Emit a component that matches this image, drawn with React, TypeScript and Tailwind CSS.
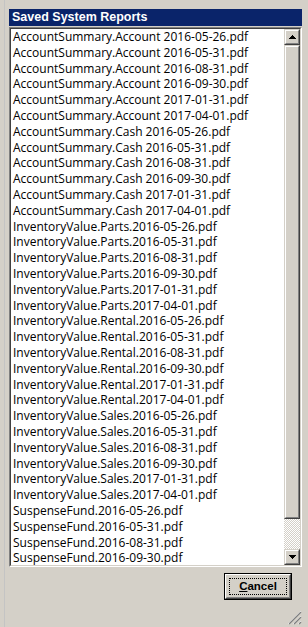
import React from "react";

const items: string[] = [
  "AccountSummary.Account 2016-05-26.pdf",
  "AccountSummary.Account 2016-05-31.pdf",
  "AccountSummary.Account 2016-08-31.pdf",
  "AccountSummary.Account 2016-09-30.pdf",
  "AccountSummary.Account 2017-01-31.pdf",
  "AccountSummary.Account 2017-04-01.pdf",
  "AccountSummary.Cash 2016-05-26.pdf",
  "AccountSummary.Cash 2016-05-31.pdf",
  "AccountSummary.Cash 2016-08-31.pdf",
  "AccountSummary.Cash 2016-09-30.pdf",
  "AccountSummary.Cash 2017-01-31.pdf",
  "AccountSummary.Cash 2017-04-01.pdf",
  "InventoryValue.Parts.2016-05-26.pdf",
  "InventoryValue.Parts.2016-05-31.pdf",
  "InventoryValue.Parts.2016-08-31.pdf",
  "InventoryValue.Parts.2016-09-30.pdf",
  "InventoryValue.Parts.2017-01-31.pdf",
  "InventoryValue.Parts.2017-04-01.pdf",
  "InventoryValue.Rental.2016-05-26.pdf",
  "InventoryValue.Rental.2016-05-31.pdf",
  "InventoryValue.Rental.2016-08-31.pdf",
  "InventoryValue.Rental.2016-09-30.pdf",
  "InventoryValue.Rental.2017-01-31.pdf",
  "InventoryValue.Rental.2017-04-01.pdf",
  "InventoryValue.Sales.2016-05-26.pdf",
  "InventoryValue.Sales.2016-05-31.pdf",
  "InventoryValue.Sales.2016-08-31.pdf",
  "InventoryValue.Sales.2016-09-30.pdf",
  "InventoryValue.Sales.2017-01-31.pdf",
  "InventoryValue.Sales.2017-04-01.pdf",
  "SuspenseFund.2016-05-26.pdf",
  "SuspenseFund.2016-05-31.pdf",
  "SuspenseFund.2016-08-31.pdf",
  "SuspenseFund.2016-09-30.pdf",
];

function Bevel({ children, className = "" }: { children?: React.ReactNode; className?: string }) {
  return (
    <div className={"border border-t-[#d4d0c8] border-l-[#d4d0c8] border-r-[#404040] border-b-[#404040] " + className}>
      <div className="w-full h-full border border-t-white border-l-white border-r-[#808080] border-b-[#808080] bg-[#d4d0c8] flex items-center justify-center">
        {children}
      </div>
    </div>
  );
}

export default function App() {
  return (
    <div className="w-[308px] h-[627px] bg-[#d4d0c8] flex overflow-hidden select-none">
      <div className="w-[4px]" />
      <div className="w-[1px] bg-[#c4c4c4]" />
      <div className="w-[4px]" />
      <div className="flex-1 flex flex-col pt-[9px]">
        <div
          className="h-[17px] bg-[#0a246a] text-white font-bold text-[12.5px] leading-[17px] pl-[3px]"
          style={{ fontFamily: '"Liberation Sans", Tahoma, sans-serif' }}
        >
          Saved System Reports
        </div>
        <div className="h-[1px]" />
        <div className="h-[540px] border border-t-[#808080] border-l-[#808080] border-r-white border-b-white">
          <div className="h-full border border-t-[#404040] border-l-[#404040] border-r-[#d4d0c8] border-b-[#d4d0c8] flex bg-white">
            <div
              className="flex-1 overflow-hidden pl-[2px] text-black text-[12px] leading-[15.8px]"
              style={{ fontFamily: '"Open Sans", "Noto Sans", sans-serif' }}
            >
              {items.map((t) => (
                <div key={t} className="whitespace-nowrap h-[15.8px]">
                  {t}
                </div>
              ))}
            </div>
            <div className="w-[16px] flex flex-col">
              <Bevel className="h-[16px] w-[16px]">
                <svg width="7" height="4" viewBox="0 0 7 4">
                  <path d="M3 0h1v1h1v1h1v1h1v1H0V3h1V2h1V1h1z" fill="#000" />
                </svg>
              </Bevel>
              <Bevel className="h-[474px] w-[16px]" />
              <div className="flex-1 bg-[repeating-conic-gradient(#ffffff_0_25%,#d4d0c8_0_50%)] bg-[length:2px_2px]" />
              <Bevel className="h-[16px] w-[16px]">
                <svg width="7" height="4" viewBox="0 0 7 4">
                  <path d="M0 0h7v1H6v1H5v1H4v1H3V3H2V2H1V1H0z" fill="#000" />
                </svg>
              </Bevel>
            </div>
          </div>
        </div>
        <div className="flex justify-end pr-[10px] pt-[6px]">
          <div className="w-[68px] h-[27px] border border-black">
            <div className="h-full border border-t-white border-l-white border-r-[#404040] border-b-[#404040]">
              <div className="h-full border border-t-[#d4d0c8] border-l-[#d4d0c8] border-r-[#808080] border-b-[#808080] p-[2px]">
                <div
                  className="h-full border border-dotted border-black flex items-center justify-center text-[11.5px] font-bold text-black"
                  style={{ fontFamily: '"Liberation Sans", Tahoma, sans-serif' }}
                >
                  <span>
                    <span className="underline">C</span>ancel
                  </span>
                </div>
              </div>
            </div>
          </div>
        </div>
        <div className="flex-1 flex items-end justify-end pb-[2px]">
          <svg width="15" height="15" viewBox="0 0 15 15">
            <path d="M14 1L1 14M14 6L6 14M14 11L11 14" stroke="#ffffff" strokeWidth="1" />
            <path d="M14 2L2 14M14 7L7 14M14 12L12 14" stroke="#808080" strokeWidth="1.4" />
          </svg>
        </div>
      </div>
      <div className="w-[6px]" />
    </div>
  );
}
